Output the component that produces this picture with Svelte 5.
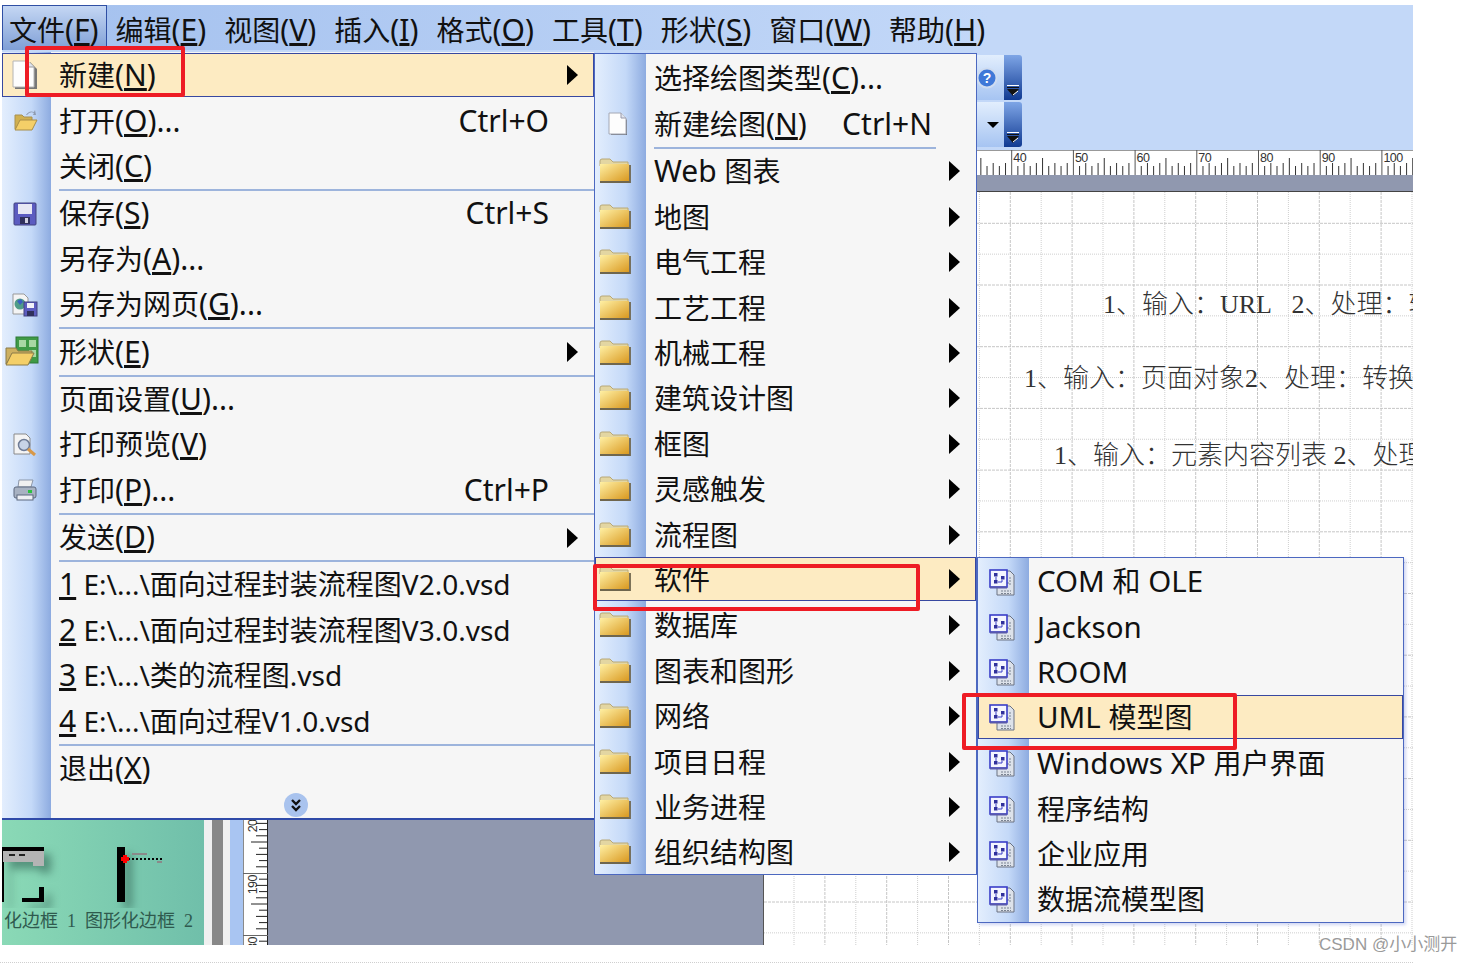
<script>
  const menuBar = [
    ["文件(", "F", ")"], ["编辑(", "E", ")"], ["视图(", "V", ")"],
    ["插入(", "I", ")"], ["格式(", "O", ")"], ["工具(", "T", ")"],
    ["形状(", "S", ")"], ["窗口(", "W", ")"], ["帮助(", "H", ")"],
  ];

  const fileMenu = [
    { pre: "新建(", key: "N", post: ")", icon: "page", sub: true, active: true },
    { pre: "打开(", key: "O", post: ")...", icon: "open", short: "Ctrl+O" },
    { pre: "关闭(", key: "C", post: ")" },
    { sep: true },
    { pre: "保存(", key: "S", post: ")", icon: "floppy", short: "Ctrl+S" },
    { pre: "另存为(", key: "A", post: ")..." },
    { pre: "另存为网页(", key: "G", post: ")...", icon: "web" },
    { sep: true },
    { pre: "形状(", key: "E", post: ")", icon: "shapes", sub: true },
    { sep: true },
    { pre: "页面设置(", key: "U", post: ")..." },
    { pre: "打印预览(", key: "V", post: ")", icon: "preview" },
    { pre: "打印(", key: "P", post: ")...", icon: "printer", short: "Ctrl+P" },
    { sep: true },
    { pre: "发送(", key: "D", post: ")", sub: true },
    { sep: true },
    { key: "1", recent: " E:\\...\\面向过程封装流程图V2.0.vsd" },
    { key: "2", recent: " E:\\...\\面向过程封装流程图V3.0.vsd" },
    { key: "3", recent: " E:\\...\\类的流程图.vsd" },
    { key: "4", recent: " E:\\...\\面向过程V1.0.vsd" },
    { sep: true },
    { pre: "退出(", key: "X", post: ")" },
  ];

  const folder = (pre, extra = {}) => ({ pre, icon: "folder", sub: true, ...extra });
  const newMenu = [
    { pre: "选择绘图类型(", key: "C", post: ")..." },
    { pre: "新建绘图(", key: "N", post: ")", icon: "smallpage", short: "Ctrl+N" },
    { sep: true },
    folder("Web 图表"), folder("地图"), folder("电气工程"), folder("工艺工程"),
    folder("机械工程"), folder("建筑设计图"), folder("框图"), folder("灵感触发"),
    folder("流程图"), folder("软件", { active: true }), folder("数据库"),
    folder("图表和图形"), folder("网络"), folder("项目日程"), folder("业务进程"),
    folder("组织结构图"),
  ];

  const softwareMenu = [
    { pre: "COM 和 OLE" }, { pre: "Jackson" }, { pre: "ROOM" },
    { pre: "UML 模型图", active: true }, { pre: "Windows XP 用户界面" },
    { pre: "程序结构" }, { pre: "企业应用" }, { pre: "数据流模型图" },
  ].map((i) => ({ ...i, icon: "stencil" }));

  const range = (n) => Array.from({ length: n }, (_, i) => i);
  // latin letters sit a little larger than the CJK ones in the reference
  const runs = (s) => (s ?? "").split(/([\x00-\x7f]+)/).filter(Boolean);
  const isLatin = (r) => /^[\x00-\x7f]/.test(r);

  const step = 61.7;
  // ruler positions are relative to the ruler's own left edge
  const rulerStart = 1011.7 - 268;
  const tickH = [25, 9, 12, 9, 12, 17, 9, 12, 9, 12];
  const gridX = range(21).map((i) => 30 + i * 30.9);
  const gridY = range(24).map((i) => 31.3 + i * 30.85);
</script>

{#snippet txt(s)}{#each runs(s) as r}<span class:lat={isLatin(r)}>{r}</span>{/each}{/snippet}

{#snippet icon(kind)}
  {#if kind === "page"}
    <svg width="26" height="30" viewBox="0 0 26 30">
      <path d="M3 2h15l7 7v20H3z" fill="#777" />
      <path d="M1 1h15l6 6v20H1z" fill="#fdfdfd" stroke="#b4b4b4" />
      <path d="M16 1v6h6" fill="#dfe4ee" stroke="#999" />
    </svg>
  {:else if kind === "smallpage"}
    <svg class="nudge" width="20" height="24" viewBox="0 0 20 24">
      <path d="M3 3h11l5 5v15H3z" fill="#6f7480" />
      <path d="M1 1h12l5 5v16H1z" fill="#fdfdfd" stroke="#a4a8b4" />
      <path d="M13 1v5h5" fill="#dfe5ef" stroke="#99a" />
    </svg>
  {:else if kind === "folder"}
    <svg width="32" height="26" viewBox="0 0 32 26">
      <defs>
        <linearGradient id="fld" x1="0" y1="0" x2="1" y2="1">
          <stop offset="0" stop-color="#fff0a4" />
          <stop offset="1" stop-color="#d8961c" />
        </linearGradient>
      </defs>
      <path d="M1 3q0-2 2-2h8l3 3h15v4H1z" fill="#e3d6a2" stroke="#b8a878" />
      <rect x="1" y="6" width="29" height="18" fill="url(#fld)" />
      <path d="M1 24h30V7" fill="none" stroke="#6f664e" stroke-width="1.8" />
    </svg>
  {:else if kind === "open"}
    <svg width="26" height="22" viewBox="0 0 26 22">
      <path d="M3 5h7l2 2h8v12H3z" fill="#d0b050" stroke="#a89050" />
      <path d="M3 20l5-10h17l-5 10z" fill="#f4cf68" stroke="#a88d48" />
      <path d="M15 5q3-4 7-2l-1 2 3 0-1-5-1 2q-5-2-8 3z" fill="#8f9bb0" />
    </svg>
  {:else if kind === "floppy"}
    <svg width="24" height="24" viewBox="0 0 24 24">
      <rect x="1" y="1" width="22" height="22" rx="1" fill="#5c5cc0" stroke="#43437f" />
      <rect x="5" y="2" width="14" height="10" fill="#e8e8f4" />
      <rect x="7" y="15" width="10" height="7" fill="#30305c" />
      <rect x="12" y="16" width="3" height="5" fill="#d0d0e0" />
    </svg>
  {:else if kind === "web"}
    <svg width="26" height="24" viewBox="0 0 26 24">
      <path d="M1 1h11l4 4v16H1z" fill="#f4f4f4" stroke="#999" />
      <circle cx="8" cy="11" r="5.5" fill="#4f9c88" />
      <path d="M5 8l4-2 2 3-3 3z" fill="#3a62c0" />
      <rect x="12" y="9" width="13" height="14" fill="#5c5cc0" stroke="#43437f" />
      <rect x="15" y="10" width="7" height="5" fill="#f2f2f8" />
      <rect x="15" y="18" width="7" height="5" fill="#30305c" />
    </svg>
  {:else if kind === "shapes"}
    <svg class="shift" width="34" height="32" viewBox="0 0 34 32">
      <rect x="11" y="1" width="22" height="26" fill="#3f9a46" stroke="#2e7a36" />
      <path d="M14 4h7v7h-7zM24 4h7v7h-7zM24 14h7v7h-7z" fill="#a9d8a4" />
      <path d="M1 28V12h10l2 3h14v3H8z" fill="#cdb060" stroke="#8a7a48" />
      <path d="M1 29l6-12h22l-6 12z" fill="#f4cf68" stroke="#8a7a48" />
    </svg>
  {:else if kind === "preview"}
    <svg width="26" height="26" viewBox="0 0 26 26">
      <path d="M2 2h12l4 4v16H2z" fill="#f4f4f4" stroke="#8a8a8a" />
      <circle cx="12" cy="13" r="5.5" fill="#c8d4e8" stroke="#6f7c96" stroke-width="1.5" />
      <path d="M16 17l7 6" stroke="#d89848" stroke-width="3" />
    </svg>
  {:else if kind === "printer"}
    <svg width="24" height="24" viewBox="0 0 24 24">
      <path d="M6 2h14l-2 7H5z" fill="#f0f0f0" stroke="#8b96a8" />
      <rect x="1" y="9" width="22" height="11" rx="2" fill="#a8b2c2" stroke="#5c687e" />
      <rect x="4" y="17" width="16" height="5" fill="#eef0f4" stroke="#5c687e" />
      <rect x="15" y="12" width="4" height="3" fill="#2cc040" />
    </svg>
  {:else if kind === "stencil"}
    <svg width="26" height="28" viewBox="0 0 26 28">
      <path d="M8 3h13l4 4v20H8z" fill="#dde2ea" stroke="#6a7383" />
      <path d="M12 23h10M12 25.5h10M21 9v8M15 15h6" stroke="#7a8392" stroke-dasharray="2 1" />
      <rect x="1" y="2" width="17" height="17" fill="#f4f5ff" stroke="#3a3ec8" stroke-width="1.6" />
      <path d="M5 5h3.5v3.5H5zM5 12h3.5v3.5H5zM12 8h3.5v3.5H12z" fill="#30309c" />
      <path d="M7 9v3M9 14h4v-2" stroke="#3a3ec8" fill="none" />
      <path d="M1 19.5h17" stroke="#5858ac" stroke-width="2" />
    </svg>
  {/if}
{/snippet}

{#snippet menu(items)}
  {#each items as item}
    {#if item.sep}
      <div class="sep"></div>
    {:else}
      <div class="row" class:active={item.active}>
        <span class="cell">
          {#if item.icon}{@render icon(item.icon)}{/if}
        </span>
        <span class="label">{@render txt(item.pre)}{#if item.key}<u class="lat">{item.key}</u>{/if}{@render txt(item.post)}{#if item.recent}<span class="recent">{item.recent}</span>{/if}</span>
        {#if item.short}<span class="short lat">{item.short}</span>{/if}
        {#if item.sub}<span class="arrow"></span>{/if}
      </div>
    {/if}
  {/each}
{/snippet}

{#snippet drop()}
  <div class="tool-drop">
    <svg width="12" height="12" viewBox="0 0 12 12">
      <path d="M0 0.5h12" stroke="#fff" />
      <path d="M0 2.5h12" stroke="#111" />
      <path d="M0 4h12l-6 7z" fill="#111" />
      <path d="M6 10l5-4" stroke="#fff" />
    </svg>
  </div>
{/snippet}

<div class="page">
  <div class="window">
    <div class="menubar">
      {#each menuBar as m, i}
        <span class="top-item" class:open={i === 0}>{@render txt(m[0])}<u class="lat">{m[1]}</u><span class="lat">{m[2]}</span></span>
      {/each}
    </div>

    <div class="toolbars">
      <div class="tool">
        <div class="tool-body">
          <svg class="help" width="22" height="22" viewBox="0 0 22 22">
            <circle cx="11" cy="11" r="9.5" fill="#3f78d8" stroke="#cfdcf0" stroke-width="2" />
            <text x="11" y="16" text-anchor="middle" font-size="14" font-weight="700" fill="#fff" font-family="Liberation Sans">?</text>
          </svg>
        </div>
        {@render drop()}
      </div>
      <div class="tool">
        <div class="tool-body"><span class="down"></span></div>
        {@render drop()}
      </div>
    </div>

    <div class="workspace">
      <div class="stencils">
        <svg class="stencil-art" width="202" height="68" viewBox="0 0 202 68">
          <g class="cast">
            <path d="M0 7h42v4H0zM0 11h2v51H0zM20 58h22v4H20zM37 47h5v11h-5z" fill="#000" />
            <path d="M1 11h41v15H31v-4H1z" fill="#b4b4b4" />
            <path d="M7 15h6M17 15h6" stroke="#222" stroke-width="2" />
            <rect x="115" y="7" width="8" height="55" fill="#000" />
          </g>
          <path d="M126 19h34" stroke="#000" stroke-width="2" stroke-dasharray="2 2" />
          <path d="M130 14h15M155 22h5" stroke="#8a8a8a" stroke-width="2" />
          <path d="M121 15h4v2h2v4h-2v2h-4v-2h-2v-4h2z" fill="#f00" />
        </svg>
        <div class="stencil-names">化边框 1 图形化边框 2</div>
      </div>
      <div class="split s1"></div>
      <div class="split s2"></div>
      <div class="split s1 narrow"></div>
      <div class="split s3"></div>
      <div class="vruler">
        <svg width="25" height="795" viewBox="0 0 25 795">
          {#each [200, 190, 180] as label, k}
            <path d={`M0 ${661 + k * 62}.5h25`} stroke="#666" />
            <text transform={`translate(14 ${663 + k * 62}) rotate(-90)`} text-anchor="end" class="rule-num">{label}</text>
            {#each range(10) as t}
              {#if t > 0}
                <path d={`M${25 - tickH[t]} ${661 + k * 62 + t * 6.2}h${tickH[t]}`} stroke="#222" />
              {/if}
            {/each}
          {/each}
        </svg>
      </div>
      <div class="sheet">
        <div class="hruler">
          <svg width="1145" height="25" viewBox="0 0 1145 25">
            {#each range(8) as k}
              <path d={`M${rulerStart + (k - 1) * step} 0v25`} stroke="#555" />
              <text x={rulerStart + (k - 1) * step + 1.5} y="12" class="rule-num">{30 + k * 10}</text>
              {#each range(10) as t}
                {#if t > 0}
                  <path d={`M${rulerStart + (k - 1) * step + t * 6.17} ${25 - tickH[t]}v${tickH[t]}`} stroke="#333" />
                {/if}
              {/each}
            {/each}
          </svg>
        </div>
        <div class="band"></div>
        <div class="sheet-body">
          <div class="gutter"></div>
          <div class="canvas">
            <svg class="grid" width="649" height="753" viewBox="0 0 649 753">
              {#each gridX as x, i}
                <path d={`M${x} 0v753`} class={i % 2 ? "major" : "minor"} />
              {/each}
              {#each gridY as y, i}
                <path d={`M0 ${y}h649`} class={i % 2 ? "minor" : "major"} />
              {/each}
            </svg>
            <div class="note n1">1、输入：URL&nbsp;&nbsp; 2、处理：转换</div>
            <div class="note n2">1、输入：页面对象2、处理：转换</div>
            <div class="note n3">1、输入：元素内容列表 2、处理：</div>
          </div>
        </div>
      </div>
    </div>
  </div>

  <div class="bottom-dots"></div>
  <div class="watermark">CSDN @小小测开</div>

  <div class="menu file-menu">
    {@render menu(fileMenu)}
    <div class="more">
      <svg width="24" height="24" viewBox="0 0 24 24">
        <circle cx="12" cy="12" r="12" fill="#a9c3ee" />
        <path d="M8 7l4 4 4-4M8 13l4 4 4-4" fill="none" stroke="#111" stroke-width="2.4" />
      </svg>
    </div>
  </div>
  <div class="menu new-menu">{@render menu(newMenu)}</div>
  <div class="menu soft-menu">{@render menu(softwareMenu)}</div>

  <div class="mark m1"></div>
  <div class="mark m2"></div>
  <div class="mark m3"></div>
</div>

<style>
  :global(body) {
    margin: 0;
    background: #fff;
  }
  .page {
    position: relative;
    width: 1471px;
    height: 964px;
    overflow: hidden;
    background: #fff;
    font-family: "Noto Sans", "Noto Sans CJK SC", sans-serif;
    color: #111;
  }
  .lat {
    font-size: 30px;
  }
  .soft-menu .lat {
    font-size: 29.5px;
  }
  .recent {
    font-size: 28px;
  }
  .window {
    position: absolute;
    left: 2px;
    top: 5px;
    width: 1411px;
    height: 940px;
    display: flex;
    flex-direction: column;
    background: #c3d8f8;
  }
  .menubar {
    height: 45px;
    flex: none;
    display: flex;
    background: linear-gradient(to right, #a3c0ee, #c3d8f8 70%);
    font-size: 28px;
  }
  .top-item {
    padding: 4px 9px 0;
    height: 45px;
    box-sizing: border-box;
    line-height: 41px;
    white-space: nowrap;
  }
  .top-item.open {
    padding: 4px 8px 0 7px;
    background: linear-gradient(#c6d8f4, #7f9fd6);
    box-shadow: inset 1px 1px 0 #2f4fa4, inset -1px 0 0 #2f4fa4;
  }
  .toolbars {
    height: 100px;
    flex: none;
    padding: 5px 0 0 974px;
    box-sizing: border-box;
    display: flex;
    flex-direction: column;
    gap: 2px;
  }
  .tool {
    width: 46px;
    height: 45px;
    display: flex;
  }
  .tool-body {
    width: 28px;
    display: flex;
    align-items: center;
    justify-content: flex-end;
    background: linear-gradient(#e2eefd, #a6c4f2);
  }
  .help {
    margin: 0 6px 0 0;
  }
  .down {
    margin-right: 5px;
    border-top: 6px solid #000;
    border-left: 6px solid transparent;
    border-right: 6px solid transparent;
  }
  .tool-drop {
    width: 18px;
    display: flex;
    align-items: flex-end;
    justify-content: center;
    padding-bottom: 3px;
    box-sizing: border-box;
    border-radius: 0 3px 3px 0;
    background: linear-gradient(#7ea5e6, #103a92);
  }
  .workspace {
    flex: 1;
    min-height: 0;
    display: flex;
  }
  .stencils {
    width: 202px;
    flex: none;
    display: flex;
    flex-direction: column;
    justify-content: flex-end;
    background: linear-gradient(to right, #8ad9b6, #70bfaa);
  }
  .stencil-art {
    display: block;
    margin-bottom: -1px;
  }
  .cast {
    filter: drop-shadow(7px 7px 4px rgba(50, 100, 85, 0.6));
  }
  .stencil-names {
    height: 38px;
    padding-left: 2px;
    font-size: 18px;
    line-height: 28px;
    word-spacing: 4.5px;
    color: #2f5a4e;
    white-space: nowrap;
    font-family: "Liberation Serif", "Noto Sans CJK SC", serif;
  }
  .split {
    flex: none;
  }
  .s1 {
    width: 8px;
    background: #f0f0f0;
  }
  .s1.narrow {
    width: 7px;
  }
  .s2 {
    width: 11px;
    background: #888;
  }
  .s3 {
    width: 13px;
    background: #a9c5f2;
  }
  .vruler {
    width: 25px;
    flex: none;
    background: #fff;
    box-shadow: inset 1px 0 0 #8a8a8a, inset -1px 0 0 #222;
  }
  .vruler svg,
  .hruler svg,
  .grid {
    display: block;
  }
  .rule-num {
    font: 12.5px "Liberation Sans", sans-serif;
    letter-spacing: -0.5px;
    fill: #333;
  }
  .sheet {
    flex: 1;
    min-width: 0;
    display: flex;
    flex-direction: column;
  }
  .hruler {
    height: 25px;
    flex: none;
    overflow: hidden;
    background: #fff;
    box-shadow: inset 0 1px 0 #999;
  }
  .band {
    height: 17px;
    flex: none;
    box-sizing: border-box;
    background: #9098af;
    border-bottom: 1px solid #444;
  }
  .sheet-body {
    flex: 1;
    min-height: 0;
    display: flex;
  }
  .gutter {
    width: 496px;
    flex: none;
    box-sizing: border-box;
    background: #9098af;
    border-right: 1px solid #555;
  }
  .canvas {
    position: relative;
    flex: 1;
    overflow: hidden;
    background: #fff;
  }
  .grid path {
    fill: none;
    stroke: #cfcfcf;
  }
  .grid .minor {
    stroke-dasharray: 1 1;
  }
  .grid .major {
    stroke: #c6c6c6;
    stroke-dasharray: 3 1;
  }
  .note {
    position: absolute;
    font-size: 26px;
    line-height: 32px;
    font-weight: 300;
    white-space: nowrap;
    color: #333;
    font-family: "Liberation Serif", "Noto Sans CJK SC", serif;
  }
  .n1 {
    left: 339px;
    top: 97px;
  }
  .n2 {
    left: 260px;
    top: 171px;
  }
  .n3 {
    left: 290px;
    top: 248px;
  }
  .bottom-dots {
    position: absolute;
    left: 0;
    top: 962px;
    width: 1413px;
    border-top: 1px dotted #cfcfcf;
  }
  .watermark {
    position: absolute;
    left: 1319px;
    top: 934px;
    font: 17px/22px "Liberation Sans", "Noto Sans CJK SC", sans-serif;
    color: #9a9a9a;
    white-space: nowrap;
  }

  .menu {
    position: absolute;
    box-sizing: border-box;
    display: flex;
    flex-direction: column;
    background: linear-gradient(to right, #e3eefd, #c4d9f8 60%, #8dabe0) 0 0 / var(--side) 100% no-repeat, #f6f6f6;
    font-size: 28px;
    white-space: nowrap;
  }
  .file-menu {
    --side: 49px;
    --cell: 46px;
    --gap: 11px;
    --sub: 16px;
    --short: 45px;
    left: 2px;
    top: 52px;
    width: 592px;
    height: 768px;
    padding-top: 1px;
    border-bottom: 2px solid #2f4aa8;
  }
  .new-menu {
    --side: 51px;
    --cell: 40px;
    --gap: 19px;
    --sub: 16px;
    --short: 44px;
    left: 594px;
    top: 53px;
    width: 383px;
    height: 822px;
    padding-top: 2px;
    border: 1px solid #4c68c0;
  }
  .soft-menu {
    --side: 51px;
    --cell: 48px;
    --gap: 11px;
    --sub: 0;
    --short: 0;
    left: 977px;
    top: 557px;
    width: 427px;
    height: 366px;
    padding-top: 1px;
    border: 1px solid #4c68c0;
    box-shadow: 2px 2px 3px rgba(120, 140, 220, 0.35);
  }
  .row {
    height: 45.4px;
    flex: none;
    display: flex;
    align-items: center;
    box-sizing: border-box;
  }
  .row.active {
    height: 44px;
    margin-bottom: 1.4px;
    background: #fdebc2;
    box-shadow: inset 0 0 0 1px #3848a0;
  }
  .cell {
    width: var(--cell);
    flex: none;
    display: flex;
    align-items: center;
    justify-content: center;
  }
  .shift {
    margin-left: -7px;
  }
  .nudge {
    margin-left: 6px;
  }
  .label {
    margin-left: var(--gap);
    padding-bottom: 2px;
  }
  .short {
    margin-left: auto;
    padding-right: var(--short);
    padding-bottom: 2px;
  }
  .arrow {
    margin-left: auto;
    margin-right: var(--sub);
    border-left: 11px solid #000;
    border-top: 10px solid transparent;
    border-bottom: 10px solid transparent;
  }
  .sep {
    height: 2px;
    flex: none;
    margin-left: 57px;
    background: #9db4dc;
  }
  .new-menu .sep {
    margin-left: 59px;
    margin-right: 40px;
  }
  .more {
    flex: 1;
    display: flex;
    align-items: center;
    justify-content: flex-end;
    padding-right: 286px;
  }
  .mark {
    position: absolute;
    box-sizing: border-box;
    border: 4px solid #ee1c25;
    border-radius: 2px;
  }
  .m1 {
    left: 25px;
    top: 46px;
    width: 160px;
    height: 51px;
  }
  .m2 {
    left: 593px;
    top: 564px;
    width: 327px;
    height: 47px;
  }
  .m3 {
    left: 962px;
    top: 693px;
    width: 275px;
    height: 57px;
  }
</style>
